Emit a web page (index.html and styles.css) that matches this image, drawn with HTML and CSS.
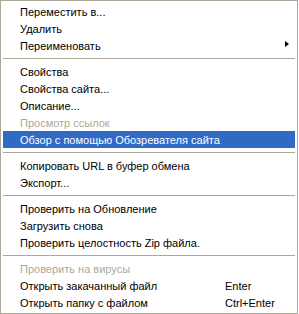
FILE: index.html
```html
<!DOCTYPE html>
<html>
<head>
<meta charset="utf-8">
<link rel="stylesheet" href="styles.css">
</head>
<body>
<div class="menu">
  <div class="item"><span class="label">Переместить в...</span></div>
  <div class="item"><span class="label">Удалить</span></div>
  <div class="item has-sub"><span class="label">Переименовать</span><span class="arrow"></span></div>
  <div class="sep"></div>
  <div class="item"><span class="label">Свойства</span></div>
  <div class="item"><span class="label">Свойства сайта...</span></div>
  <div class="item"><span class="label">Описание...</span></div>
  <div class="item disabled"><span class="label">Просмотр ссылок</span></div>
  <div class="item active"><span class="label">Обзор с помощью Обозревателя сайта</span></div>
  <div class="sep"></div>
  <div class="item"><span class="label">Копировать URL в буфер обмена</span></div>
  <div class="item"><span class="label">Экспорт...</span></div>
  <div class="sep"></div>
  <div class="item"><span class="label">Проверить на Обновление</span></div>
  <div class="item"><span class="label">Загрузить снова</span></div>
  <div class="item"><span class="label">Проверить целостность Zip файла.</span></div>
  <div class="sep"></div>
  <div class="item disabled"><span class="label">Проверить на вирусы</span></div>
  <div class="item"><span class="label">Открыть закачанный файл</span><span class="key">Enter</span></div>
  <div class="item"><span class="label">Открыть папку с файлом</span><span class="key">Ctrl+Enter</span></div>
</div>
</body>
</html>
```
FILE: styles.css
```css
html, body {
  margin: 0;
  padding: 0;
  background: #ffffff;
}
.menu {
  width: 298px;
  box-sizing: border-box;
  border: 1px solid #aca899;
  padding: 2px;
  background: #ffffff;
  display: flex;
  flex-direction: column;
  font-family: "Liberation Sans", Arial, sans-serif;
  font-size: 11px;
  color: #000000;
}
.item {
  height: 17px;
  display: flex;
  align-items: center;
  padding-left: 17px;
  position: relative;
  white-space: nowrap;
}
.item .label {
  flex: 0 0 205px;
}
.item .key {
  flex: 1;
}
.item.disabled {
  color: #aca899;
}
.item.active {
  background: #316ac5;
  color: #ffffff;
}
.arrow {
  position: absolute;
  right: 6px;
  top: 4px;
  width: 0;
  height: 0;
  border-top: 3.5px solid transparent;
  border-bottom: 3.5px solid transparent;
  border-left: 4px solid #000000;
}
.sep {
  height: 9px;
  display: flex;
  align-items: center;
}
.sep::before {
  content: "";
  display: block;
  width: 100%;
  height: 1px;
  background: #aca899;
}
```
